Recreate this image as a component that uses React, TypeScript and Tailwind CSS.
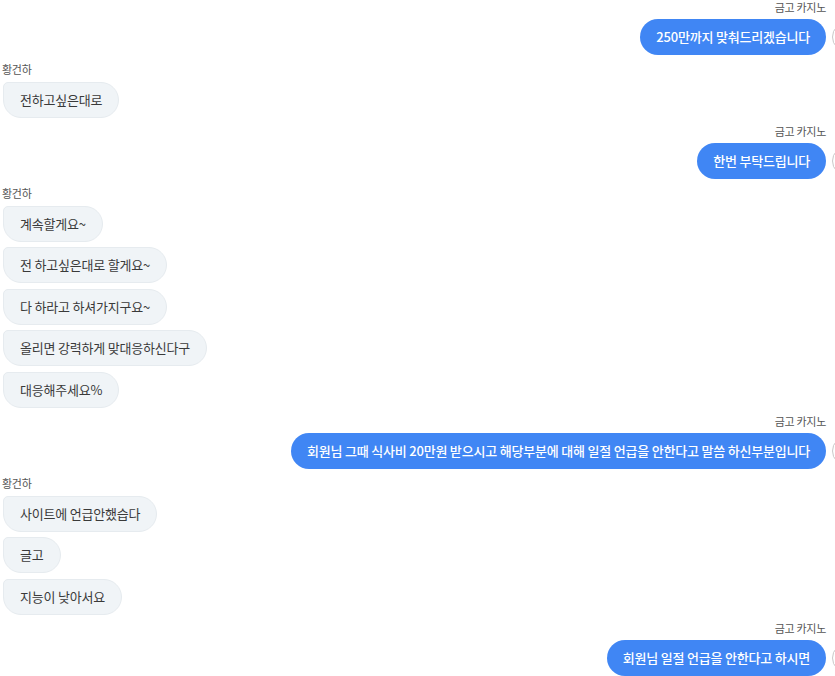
import React from "react";

type Group = { side: "left" | "right"; name: string; msgs: string[] };

const groups: Group[] = [
  { side: "right", name: "금고 카지노", msgs: ["250만까지 맞춰드리겠습니다"] },
  { side: "left", name: "황건하", msgs: ["전하고싶은대로"] },
  { side: "right", name: "금고 카지노", msgs: ["한번 부탁드립니다"] },
  {
    side: "left",
    name: "황건하",
    msgs: [
      "계속할게요~",
      "전 하고싶은대로 할게요~",
      "다 하라고 하셔가지구요~",
      "올리면 강력하게 맞대응하신다구",
      "대응해주세요%",
    ],
  },
  {
    side: "right",
    name: "금고 카지노",
    msgs: ["회원님 그때 식사비 20만원 받으시고 해당부분에 대해 일절 언급을 안한다고 말씀 하신부분입니다"],
  },
  { side: "left", name: "황건하", msgs: ["사이트에 언급안했습다", "글고", "지능이 낮아서요"] },
  { side: "right", name: "금고 카지노", msgs: ["회원님 일절 언급을 안한다고 하시면"] },
];

const font = { fontFamily: '"Noto Sans CJK KR", "Noto Sans", sans-serif' };

export default function App() {
  return (
    <div className="w-[835px] h-[676px] overflow-hidden bg-white" style={font}>
      <div className="flex flex-col gap-[6.5px]">
        {groups.map((g, i) =>
          g.side === "right" ? (
            <div key={i} className="flex flex-col items-end mr-[-27px]">
              <div className="h-[14px] leading-[14px] text-[11px] text-[#555] pr-[36px] tracking-[-0.3px]">{g.name}</div>
              <div className="mt-[5px] flex flex-col items-end gap-[5.5px]">
                {g.msgs.map((m, j) => (
                  <div key={j} className="flex items-center gap-[6px]">
                    <div className="h-[36px] flex items-center px-4 rounded-[18px] bg-[#4086f4] text-white text-[13px] font-medium tracking-[-0.2px] whitespace-nowrap">
                      {m}
                    </div>
                    <div className="w-[30px] h-[30px] rounded-full border border-[#c8c8c8] bg-white shrink-0" />
                  </div>
                ))}
              </div>
            </div>
          ) : (
            <div key={i} className="flex flex-col items-start pl-[2px]">
              <div className="h-[14px] leading-[14px] text-[11px] text-[#555] tracking-[-0.3px]">{g.name}</div>
              <div className="mt-[6px] flex flex-col items-start gap-[5.5px] pl-[1px]">
                {g.msgs.map((m, j) => (
                  <div
                    key={j}
                    className="h-[36px] flex items-center px-4 rounded-[18px] rounded-tl-[5px] bg-[#f0f4f7] border border-[#e6ebef] text-[#3a3a3a] text-[13px] tracking-[-0.2px] whitespace-nowrap"
                  >
                    {m}
                  </div>
                ))}
              </div>
            </div>
          )
        )}
      </div>
    </div>
  );
}
